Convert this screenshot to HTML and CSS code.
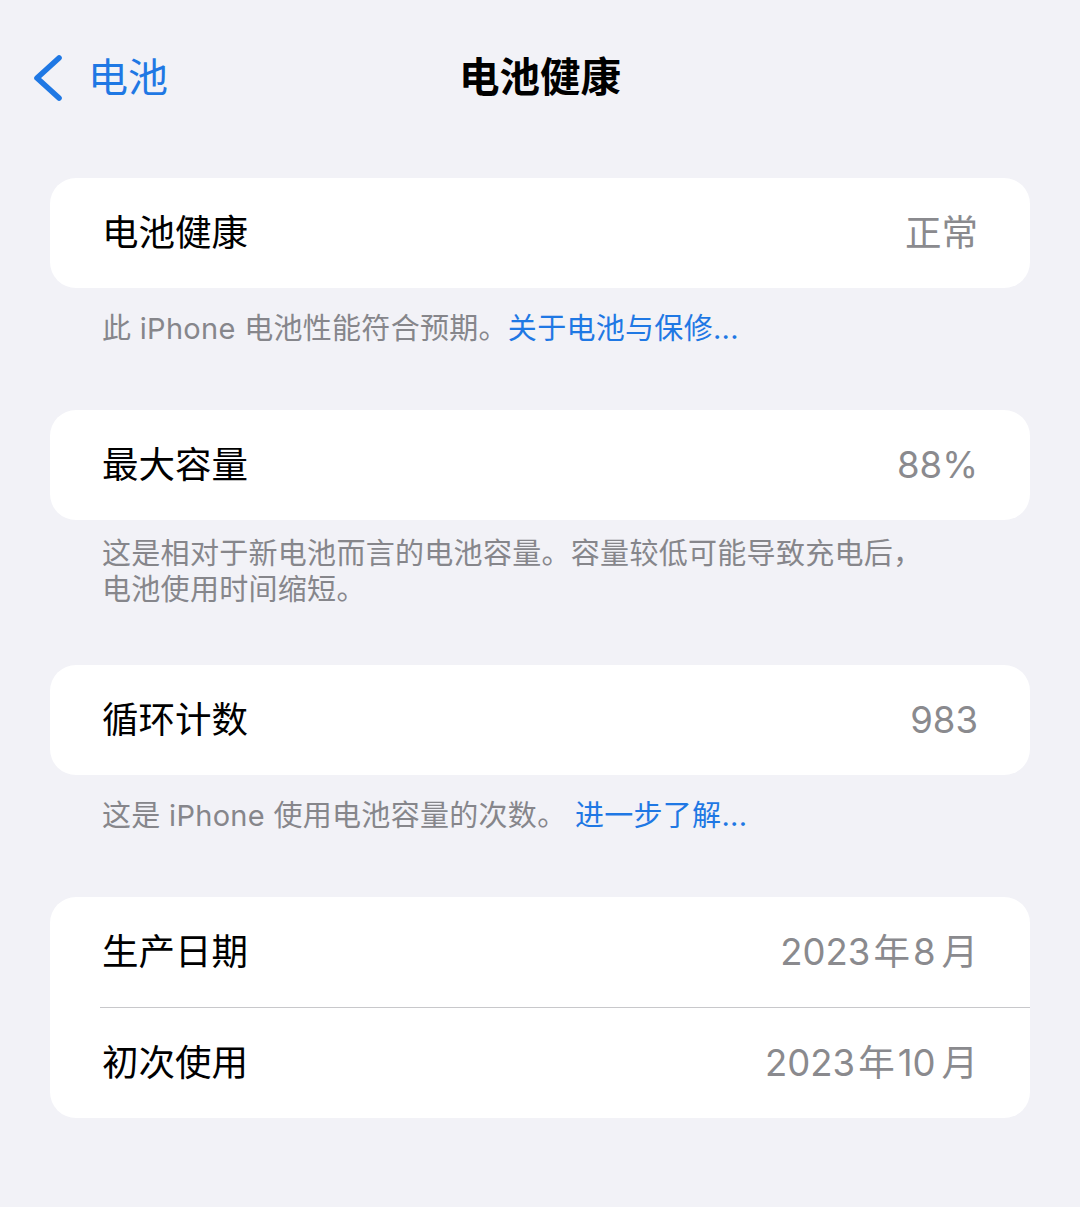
FILE: index.html
```html
<!DOCTYPE html>
<html lang="zh-CN">
<head>
<meta charset="utf-8">
<title>电池健康</title>
<link rel="stylesheet" href="styles.css">
</head>
<body>
<header class="nav">
  <a class="back">
    <svg class="chev" width="30" height="48" viewBox="0 0 30 48" aria-hidden="true">
      <path d="M26 4 L4 24 L26 44" fill="none" stroke="#1f78e4" stroke-width="5.6" stroke-linecap="round" stroke-linejoin="round"/>
    </svg>
    <span class="back-text">电池</span>
  </a>
  <h1 class="title">电池健康</h1>
  <span></span>
</header>
<main class="content">
  <section class="card">
    <div class="row"><span class="label">电池健康</span><span class="value">正常</span></div>
  </section>
  <p class="foot">此 iPhone 电池性能符合预期。<span class="link">关于电池与保修...</span></p>

  <section class="card">
    <div class="row"><span class="label">最大容量</span><span class="value">88%</span></div>
  </section>
  <p class="foot foot-two">这是相对于新电池而言的电池容量。容量较低可能导致充电后，<br>电池使用时间缩短。</p>

  <section class="card">
    <div class="row"><span class="label">循环计数</span><span class="value">983</span></div>
  </section>
  <p class="foot">这是 iPhone 使用电池容量的次数。 <span class="link">进一步了解...</span></p>

  <section class="card">
    <div class="row"><span class="label">生产日期</span><span class="value">2023<span class="unit">年</span>8<span class="unit unit-end">月</span></span></div>
    <div class="sep"></div>
    <div class="row"><span class="label">初次使用</span><span class="value">2023<span class="unit">年</span>10<span class="unit unit-end">月</span></span></div>
  </section>
</main>
</body>
</html>
```
FILE: styles.css
```css
html, body {
  margin: 0;
  padding: 0;
  background: #f2f2f7;
}
body {
  font-family: Inter, "Noto Sans CJK SC", "Noto Sans", sans-serif;
  color: #000;
  width: 1080px;
  height: 1207px;
  overflow: hidden;
}
.nav {
  height: 156px;
  display: grid;
  grid-template-columns: 1fr auto 1fr;
  align-items: center;
}
.back {
  display: flex;
  align-items: center;
  padding-left: 33px;
  color: #1f78e4;
}
.chev {
  display: block;
}
.back-text {
  margin-left: 25px;
  font-size: 40px;
  line-height: 48px;
}
.title {
  margin: 0;
  font-size: 40.5px;
  font-weight: 700;
  line-height: 48px;
}
.content {
  padding: 22px 50px 0;
}
.card {
  background: #fff;
  border-radius: 26px;
  overflow: hidden;
}
.row {
  height: 110px;
  display: flex;
  align-items: center;
  justify-content: space-between;
  padding: 0 52px;
}
.label {
  font-size: 36.5px;
  line-height: 44px;
}
.value {
  font-size: 36.5px;
  line-height: 44px;
  color: #8a8a8e;
}
.unit {
  margin: 0 3px;
}
.unit-end {
  margin-right: 0;
  margin-left: 6px;
}
.sep {
  height: 1px;
  margin-left: 50px;
  background: #c8c8cb;
}
.foot {
  margin: 0;
  padding: 23px 52px 63px;
  font-size: 29px;
  letter-spacing: 0.3px;
  line-height: 36px;
  color: #86868b;
}
.foot-two {
  padding-top: 16px;
  padding-bottom: 57px;
}
.link {
  color: #1f78e4;
}
```
